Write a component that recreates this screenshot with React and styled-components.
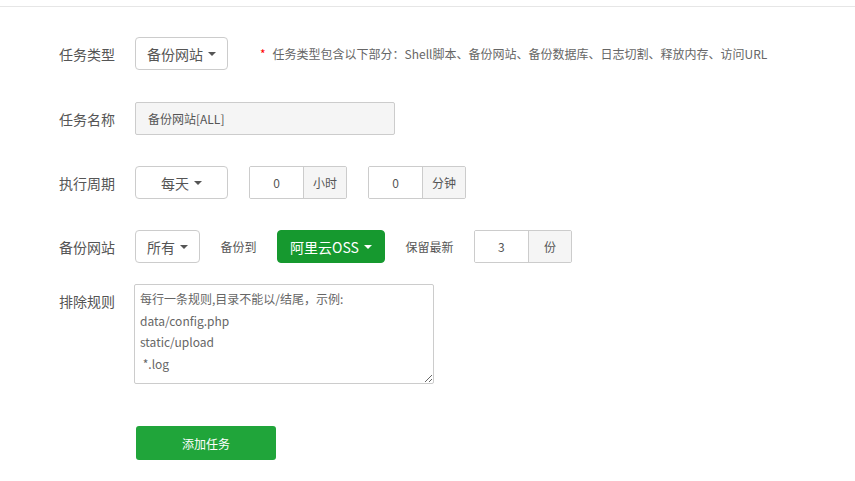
import React from "react";
import styled, { createGlobalStyle } from "styled-components";

const Global = createGlobalStyle`
  html, body { margin: 0; padding: 0; background: #fff; }
  body {
    font-family: "Noto Sans CJK SC", "Noto Sans", sans-serif;
    color: #555;
  }
  * { box-sizing: border-box; }
`;

const Page = styled.div`
  margin-top: 6px;
  border-top: 1px solid #e6e6e6;
  padding: 30px 0 0 59px;
  min-height: 474px;
`;

const Row = styled.div`
  display: flex;
  align-items: ${(p) => (p.$top ? "flex-start" : "center")};
  min-height: 33px;
  margin-bottom: ${(p) => p.$mb ?? 31}px;
`;

const Label = styled.div`
  width: 76px;
  flex: none;
  font-size: 14px;
  line-height: 20px;
  color: #555;
  padding-top: ${(p) => (p.$top ? 7 : 0)}px;
`;

const Controls = styled.div`
  display: flex;
  align-items: center;
  gap: ${(p) => p.$gap ?? 21}px;
`;

const Caret = styled.span`
  display: inline-block;
  flex: none;
  width: 0;
  height: 0;
  margin-left: 5px;
  border-left: 4px solid transparent;
  border-right: 4px solid transparent;
  border-top: 4px solid currentColor;
`;

const Dropdown = styled.button`
  display: inline-flex;
  align-items: center;
  justify-content: center;
  white-space: nowrap;
  flex: none;
  height: 33px;
  width: ${(p) => (p.$w ? `${p.$w}px` : "auto")};
  padding: 0 ${(p) => (p.$green ? 12 : 11)}px;
  border: 1px solid ${(p) => (p.$green ? "#16992f" : "#ccc")};
  border-radius: 4px;
  background: ${(p) => (p.$green ? "#16992f" : "#fff")};
  color: ${(p) => (p.$green ? "#fff" : "#555")};
  font-family: inherit;
  font-size: 14px;
  cursor: pointer;
`;

const Note = styled.div`
  margin-left: 32px;
  font-size: 12px;
  color: #666;
  display: flex;
  align-items: center;
`;

const Star = styled.span`
  color: #f00;
  margin-right: 7px;
`;

const TextInput = styled.input`
  width: 260px;
  height: 33px;
  padding: 0 12px;
  border: 1px solid #ccc;
  border-radius: 2px;
  background: #f5f5f5;
  color: #555;
  font-family: inherit;
  font-size: 12px;
  outline: none;
`;

const Group = styled.div`
  display: flex;
  height: 33px;
  border: 1px solid #ccc;
  border-radius: 2px;
  overflow: hidden;
`;

const GroupInput = styled.input`
  width: 53px;
  border: 0;
  text-align: center;
  font-family: inherit;
  font-size: 12px;
  color: #555;
  outline: none;
  background: #fff;
`;

const Addon = styled.span`
  width: 43px;
  display: flex;
  align-items: center;
  justify-content: center;
  border-left: 1px solid #ccc;
  background: #f5f5f5;
  font-size: 12px;
  color: #555;
`;

const Text = styled.span`
  font-size: 12px;
  color: #555;
  white-space: nowrap;
`;

const Area = styled.textarea`
  width: 300px;
  height: 100px;
  margin-left: -1px;
  padding: 3px 5px;
  border: 1px solid #ccc;
  border-radius: 2px;
  font-family: inherit;
  font-size: 12px;
  line-height: 21.5px;
  color: #555;
  outline: none;
  &::placeholder { color: #666; opacity: 1; }
`;

const AddButton = styled.button`
  margin-left: 77px;
  width: 140px;
  height: 34px;
  border: 0;
  border-radius: 3px;
  background: #20a53a;
  color: #fff;
  font-family: inherit;
  font-size: 12px;
  cursor: pointer;
`;

function NumGroup({ value, unit }) {
  return (
    <Group>
      <GroupInput defaultValue={value} />
      <Addon>{unit}</Addon>
    </Group>
  );
}

export default function App() {
  return (
    <>
      <Global />
      <Page>
        <Row $mb={32}>
          <Label>任务类型</Label>
          <Dropdown>
            备份网站<Caret />
          </Dropdown>
          <Note>
            <Star>*</Star>
            任务类型包含以下部分：Shell脚本、备份网站、备份数据库、日志切割、释放内存、访问URL
          </Note>
        </Row>
        <Row>
          <Label>任务名称</Label>
          <TextInput defaultValue="备份网站[ALL]" disabled />
        </Row>
        <Row>
          <Label>执行周期</Label>
          <Controls>
            <Dropdown $w={93}>
              每天<Caret />
            </Dropdown>
            <NumGroup value="0" unit="小时" />
            <NumGroup value="0" unit="分钟" />
          </Controls>
        </Row>
        <Row $mb={21}>
          <Label>备份网站</Label>
          <Controls $gap={20.5}>
            <Dropdown>
              所有<Caret />
            </Dropdown>
            <Text>备份到</Text>
            <Dropdown $green>
              阿里云OSS<Caret />
            </Dropdown>
            <Text>保留最新</Text>
            <NumGroup value="3" unit="份" />
          </Controls>
        </Row>
        <Row $top $mb={42}>
          <Label $top>排除规则</Label>
          <Area
            placeholder={"每行一条规则,目录不能以/结尾，示例:\ndata/config.php\nstatic/upload\n *.log"}
          />
        </Row>
        <AddButton>添加任务</AddButton>
      </Page>
    </>
  );
}
